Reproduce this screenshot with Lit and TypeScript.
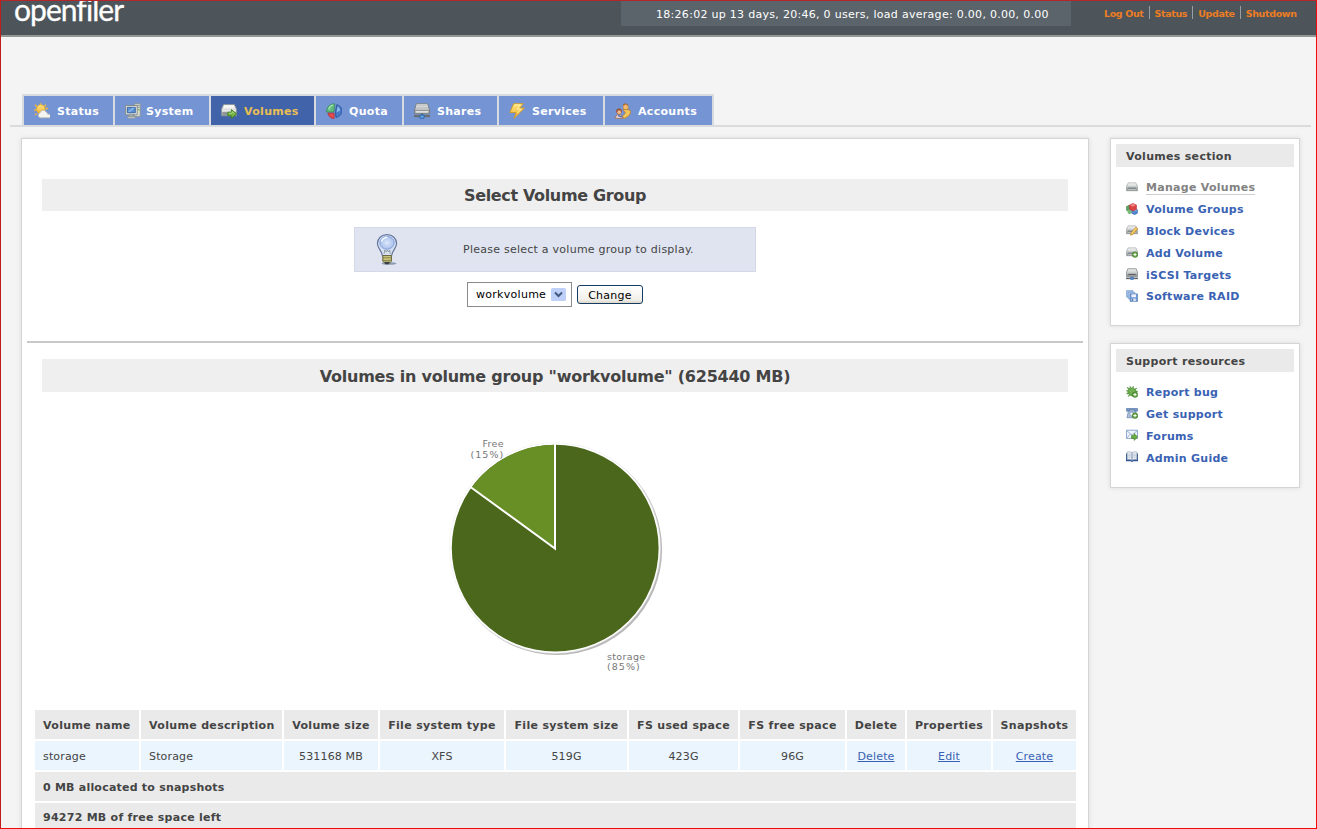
import { LitElement, html, css, svg } from "lit";
import { customElement, state } from "lit/decorators.js";
import { classMap } from "lit/directives/class-map.js";

const drive = svg`
  <path d="M3 2.500h10l2.500 4.700v5.800H.500V7.200z" fill="url(#steel)" stroke="#8f9496" stroke-width=".8"/>
  <path d="M3.400 3.200h9.200l1.300 2.800H2z" fill="#e4e5e5"/>
  <path d="M1 7.500h14v5.100H1z" fill="url(#steelDark)"/>
  <path d="M2.500 9h11v1.500h-11z" fill="#6f7578"/><path d="M2.500 11h11" stroke="#eee" stroke-width=".7"/>`;

const plus = svg`
  <circle cx="12" cy="11.500" r="3.700" fill="#5d9c3c" stroke="#3f7a28" stroke-width=".7"/>
  <path d="M12 9.300v4.400M9.800 11.500h4.400" stroke="#fff" stroke-width="1.300"/>`;

const ICONS: Record<string, unknown> = {
  status: svg`
    <path d="M6.500.2v2.200M1 1.800l1.800 1.800M12 1.800l-1.700 1.800M.2 7h2M1 12l1.700-1.500M14 5.500h-2" stroke="#edb63c" stroke-width="1.500"/>
    <circle cx="6.800" cy="6.200" r="4.400" fill="url(#gold)" stroke="#e5a52d" stroke-width=".8"/>
    <path d="M6.300 14.800a2.600 2.600 0 0 1-.3-5 3.300 3.300 0 0 1 6.200-.6 2 2 0 0 1 1.600 2 1.800 1.800 0 0 1 1.600 3.600z" fill="#f4f4f0" stroke="#b9b9ae" stroke-width=".8"/>`,
  system: svg`
    <path d="M9.500.8h5.700v12.600H9.500z" fill="#dcded7" stroke="#8d948d" stroke-width=".9"/>
    <path d="M11 2.600h3.400M11 4.400h3.400" stroke="#7e8883" stroke-width=".8"/><rect x="13" y="6" width="1.400" height="1.400" fill="#6abf3f"/>
    <path d="M.6 2.500h11.600v9.300H.6z" fill="#e4e6df" stroke="#7f8785" stroke-width=".9"/>
    <path d="M2.300 4.300h8v5.500h-8z" fill="#5b93d6" stroke="#315f9d" stroke-width=".9"/>
    <path d="M2.800 9 7.500 4.800h2.200L4.900 9z" fill="#8db9ea"/>
    <path d="M4.500 12.200h3.800v1.300H4.500zM2.800 13.600h7.200v1.600H2.800z" fill="#d3d6d0" stroke="#868d89" stroke-width=".6"/>`,
  volumes: svg`
    <path d="M2.700 1.500h10.600l2.200 4.500v6.800H.500V6z" fill="url(#steel)" stroke="#8a8f91" stroke-width=".8"/>
    <path d="M3.200 2.300h9.600L14 5.400H2z" fill="#f5f5f4"/><path d="M1 6.500h14v2H1z" fill="#e9e9e7"/><path d="M1.500 9.200h13v2.600h-13z" fill="#8d9294"/>
    <path d="M6.800 9.200h3.600V6.600l5.200 4.300-5.200 4.600v-2.700H6.800z" fill="#72b444" stroke="#3f7f23" stroke-width=".9"/><path d="M7.700 10.200h3.500V8.600l2.500 2.200" fill="none" stroke="#b5dd8c" stroke-width=".8"/>`,
  quota: svg`
    <path d="M.7 9C.4 3.700 4.500.8 8.700.8L7.800 9z" fill="#62bd7e" stroke="#2e8b50" stroke-width=".8"/>
    <path d="M2.700 6.400C3.400 3.700 5 2.400 7.300 2" stroke="#b5e7c0" fill="none" stroke-width="1.200"/>
    <path d="M1.800 10.200h6.300v5.200c-3 0-5.300-1.600-6.300-5.200z" fill="#e64c4c" stroke="#b52c33" stroke-width=".8"/>
    <path d="M10.800 1.700c4.200 1 5.600 4.700 4.800 7.900-.7 2.500-2.800 4.400-5.700 4.800L9.400 8.800z" fill="#467bc8" stroke="#264f96" stroke-width=".8"/>
    <path d="M11.600 3.500c1.500.9 2.300 2.300 2.500 4l-3.400 1.700z" fill="#91bae9"/>`,
  shares: svg`
    <path d="M2.300.8h11.400l1.800 6.400v3H.5v-3z" fill="url(#steel)" stroke="#74797b" stroke-width=".9"/>
    <path d="M3 2.400h10M2.500 4.300h11M2 6.100h12" stroke="#b5b8b8" stroke-width=".7"/>
    <path d="M1 7.600h14v2.600H1z" fill="#e6e7e5" stroke="#75797a" stroke-width=".7"/>
    <path d="M0 13h16" stroke="#6b6f71" stroke-width="2.400"/><path d="M8 10.500v2" stroke="#55595b" stroke-width="1.800"/>
    <path d="M6 12h4v3.300H6z" fill="#67a4e3" stroke="#2a64ad" stroke-width=".9"/>`,
  services: svg`
    <path d="M4.700.7h9.600L10.800 5h4.700L5 15.500l2.200-6H.8z" fill="url(#gold)" stroke="#d09b24" stroke-width=".9"/>
    <path d="M5.700 2h5.700L8.300 6.200h4L8.500 10" fill="none" stroke="#fff0a6" stroke-width=".9"/>`,
  accounts: svg`
    <path d="M8 1.800c1-2 4.800-2 5.200.8v3.500H8.600z" fill="#9b5b25"/><circle cx="10.700" cy="4.200" r="2.600" fill="#f2b96f" stroke="#b97c3c" stroke-width=".5"/>
    <path d="M8.200 7.200c2-1 5.300-.9 7.200.5.6 2.300-.8 5.700-6.200 7.700l-2-1.600c1.300-2 3-3 3.200-4.400z" fill="#f1c45d" stroke="#b67d28" stroke-width=".8"/>
    <circle cx="4" cy="8.200" r="2.800" fill="#9a4f31"/><circle cx="4.200" cy="9.200" r="1.900" fill="#f0b98b"/>
    <path d="M.5 15.400c0-3 1.500-4 3.500-4s3.600 1.200 3.600 4z" fill="#e9d4d4" stroke="#a06a4c" stroke-width=".8"/><path d="M3 12.500 7 14" stroke="#5a79b4" stroke-width="1.400"/>`,
  drive,
  groups: svg`
    <path d="M.6 4.800 4 3l3.500 1.800v5L4 11.600.6 9.800z" fill="#5ca566" stroke="#377d44" stroke-width=".7"/>
    <path d="m7.400 9 4-1.800L15.300 9v4.600l-3.900 1.900-4-1.900z" fill="#5487cb" stroke="#32609f" stroke-width=".7"/><path d="m7.600 9.200 3.800 1.600 3.600-1.600-3.600-1.500z" fill="#a5c6ec"/>
    <path d="m4.500 8.500 2.600 1.300v4L4.300 15l-2-1.200V9.700z" fill="#77ba7a"/>
    <path d="M4.500 2.800 9.200.5 14 2.700v5.500l-4.700 2.300-4.800-2.300z" fill="#dc4444" stroke="#b22c35" stroke-width=".7"/><path d="m5.500 2.900 3.800-1.700 3.800 1.600-3.900 1.900z" fill="#f29391"/>`,
  block: svg`${drive}<path d="m13 4.300 2.700 1.900-6.100 7.400-3.500 1.500.8-3.600z" fill="#efbc4c" stroke="#b98023" stroke-width=".8"/><path d="m13.500 5.800-6 7" stroke="#ffe69a"/>`,
  add: svg`${drive}${plus}`,
  iscsi: svg`
    <path d="M2.400 1h11.200l1.900 5.500v4.700H.5V6.500z" fill="url(#steel)" stroke="#6d7274" stroke-width=".9"/><path d="M1 6.800h14v4H1z" fill="url(#steelDark)"/><path d="M3 8.600h10" stroke="#5d6163" stroke-width="1.400"/>
    <path d="M0 13.800h16" stroke="#686c6e" stroke-width="2.200"/><path d="M6.300 12.300h3.400v3H6.300z" fill="#5797dd" stroke="#2762a9" stroke-width=".7"/>`,
  raid: svg`
    <path d="M.6.8h8.800v8.600H.6z" fill="#a3c0e8" stroke="#7a9ccd" stroke-width=".9"/>
    <path d="M2.900 3h8.800v8.800H2.900z" fill="#b5cdee" stroke="#7196cb" stroke-width=".9"/>
    <path d="M5.500 5.200h9.800v10H5.500z" fill="#719bd6" stroke="#4f79b5" stroke-width=".9"/><path d="M7.300 5.800h6v3.800h-6z" fill="#f1f5fb"/><path d="M7.600 11.400h5.500v3.500H7.600z" fill="#dce5ef"/><path d="M8.300 11.800h1.400v2.800H8.300z" fill="#41699f"/>`,
  bug: svg`
    <path d="M4.500 4 1.300 2M3.500 6.500.3 6.300M3.600 9 .8 10.500M6 3.300 5.300.5M9 3 10 .4M11.500 5l2.800-2.200M12.800 7.600l2.800-.3M5 11.500l-2 2.500" stroke="#5d9a48" stroke-width="1.600"/>
    <ellipse cx="8.200" cy="7.900" rx="5.900" ry="5.200" transform="rotate(28 8.200 7.900)" fill="#68a94a" stroke="#4b8837" stroke-width=".8"/><path d="m4.500 6 6 5M7 4l5 4" stroke="#8fc46c"/>${plus}`,
  phone: svg`
    <path d="M.7 5.500V2h14.600v3.500h-4V4H4.700v1.500z" fill="#7898c7" stroke="#4a6c9f" stroke-width=".8"/>
    <path d="M3.200 5.200h9.600l1.900 9.100H1.300z" fill="#aebfda" stroke="#5575a5" stroke-width=".8"/><circle cx="7.700" cy="9.400" r="2.700" fill="#f3f6fa" stroke="#6280ab" stroke-width=".8"/>${plus}`,
  mail: svg`
    <path d="M.6 1.600h14.800v11H.6z" fill="#f0f4fa" stroke="#6b8dbd"/><path d="m1 2.200 7 6 7-6M1 12l5-5.400" fill="none" stroke="#7f9dc8"/>
    <path d="M7.400 8.500h3.400V6l4.800 4.600-4.800 4.600v-2.600H7.400z" fill="#6aad42" stroke="#3f7d25" stroke-width=".8"/>`,
  book: svg`
    <path d="M0 3.200h16v10.500H9.500L8 15l-1.500-1.300H0z" fill="#31588f"/>
    <path d="M1.500 1.400C4.200.7 6.800 1.100 8 2.300c1.200-1.200 3.800-1.600 6.500-.9v10.200c-2.700-.6-5.100-.2-6.500.9-1.400-1.100-3.800-1.500-6.500-.9z" fill="#eef1f6" stroke="#7889a5" stroke-width=".7"/>
    <path d="M8 2.300v10" stroke="#536f9a" stroke-width="1.100"/><path d="M3 4.200h3.300M3 6.300h3.300M3 8.400h3.300M9.800 4.200H13M9.800 6.300H13M9.800 8.400H13" stroke="#a7b3c5" stroke-width=".9"/>`,
};

const icon = (name: string, cls: string) =>
  html`<svg class=${cls} viewBox="0 0 16 16" aria-hidden="true">${ICONS[name]}</svg>`;

const TABS = [
  ["status", "Status"],
  ["system", "System"],
  ["volumes", "Volumes"],
  ["quota", "Quota"],
  ["shares", "Shares"],
  ["services", "Services"],
  ["accounts", "Accounts"],
];

const SECTION_LINKS = [
  ["drive", "Manage Volumes"],
  ["groups", "Volume Groups"],
  ["block", "Block Devices"],
  ["add", "Add Volume"],
  ["iscsi", "iSCSI Targets"],
  ["raid", "Software RAID"],
];

const SUPPORT_LINKS = [
  ["bug", "Report bug"],
  ["phone", "Get support"],
  ["mail", "Forums"],
  ["book", "Admin Guide"],
];

const COLUMNS = [
  "Volume name", "Volume description", "Volume size", "File system type", "File system size",
  "FS used space", "FS free space", "Delete", "Properties", "Snapshots",
];
const VOLUME = ["storage", "Storage", "531168 MB", "XFS", "519G", "423G", "96G"];
const ACTIONS = ["Delete", "Edit", "Create"];

@customElement("app-root")
export class AppRoot extends LitElement {
  @state() private tab = "Volumes";

  static styles = css`
    :host {
      display: block;
      box-sizing: border-box;
      width: 1317px;
      height: 829px;
      overflow: hidden;
      border: 1px solid #f00a0a;
      border-top-color: #b4262a;
      border-left-color: #c01c1c;
      background: #f4f4f4;
      color: #444;
      font-family: "DejaVu Sans", Verdana, sans-serif;
      font-size: 11px;
      line-height: 14px;
    }
    * { box-sizing: border-box; }
    a { color: #3a62b3; text-decoration: none; cursor: pointer; }
    .defs { display: block; width: 0; height: 0; }
    .header {
      display: flex;
      align-items: flex-start;
      height: 36px;
      background: #4d555a;
      border-bottom: 2px solid #929896;
    }
    .logo {
      width: 620px;
      padding-left: 13px;
      color: #fff;
      font: 400 30px/17px Lato, sans-serif;
      letter-spacing: -0.95px;
      -webkit-text-stroke: 0.3px #fff;
    }
    .uptime {
      width: 450px;
      height: 25px;
      padding: 6px 0 0 35px;
      background: #5b646a;
      color: #fff;
      white-space: nowrap;
      line-height: 16px;
      letter-spacing: 0.29px;
    }
    .session { display: flex; padding: 5px 0 0 28px; font-size: 9.5px; font-weight: 700; }
    .session a {
      height: 13px;
      padding: 0 5px;
      color: #ee7d22;
      line-height: 16px;
      letter-spacing: -0.36px;
      white-space: nowrap;
      border-right: 1px solid #9a9fa1;
    }
    .session a:last-child { border: 0; }
    .nav { margin: 57px 5px 0 9px; padding-left: 12px; border-bottom: 2px solid #dadbdc; }
    .tabs {
      display: grid;
      grid-template-columns: 89px 94px 103px 86px 93px 104px 107px;
      gap: 2px;
      width: 692px;
      padding: 2px 2px 0;
      background: #d8dbdf;
    }
    .tab {
      display: flex;
      align-items: center;
      height: 29px;
      padding: 1px 0 0 10px;
      background: #7594d4;
      color: #fff;
      font-weight: 700;
      letter-spacing: 0.3px;
      line-height: 15px;
    }
    .tab:nth-child(2) .tab-icon { margin-right: 5px; }
    .tab.current { background: #4163aa; color: #e9bf52; }
    .tab-icon { width: 16px; height: 16px; margin-right: 7px; }
    .body { display: flex; align-items: flex-start; gap: 21px; padding: 11px 0 0 20px; }
    .panel { background: #fff; border: 1px solid #d4d5d6; box-shadow: 0 0 5px rgba(0, 0, 0, 0.1); }
    .main { width: 1068px; height: 720px; padding: 40px 5px 0; }
    .band {
      height: 32px;
      margin: 0 15px;
      background: #efefef;
      text-align: center;
      font-size: 16px;
      font-weight: 700;
      line-height: 33px;
      letter-spacing: -0.35px;
    }
    .tip {
      display: flex;
      align-items: center;
      width: 402px;
      height: 45px;
      margin: 16px auto 10px;
      border: 1px solid #d3d9e7;
      background: #e0e4f0;
      letter-spacing: 0.25px;
    }
    .bulb { width: 24px; height: 34px; margin: 0 64px 0 20px; }
    .picker { display: flex; align-items: center; justify-content: center; gap: 5px; height: 25px; color: #000; }
    .select {
      display: flex;
      align-items: center;
      justify-content: space-between;
      width: 105px;
      height: 25px;
      padding: 0 5px 0 8px;
      border: 1px solid #8b8b8b;
      background: #fff;
      letter-spacing: 0.28px;
    }
    .value { padding-top: 1px; }
    .arrow { width: 15px; height: 13px; }
    .change {
      width: 66px;
      height: 19px;
      padding: 1px 0 0;
      border: 1px solid #163c61;
      border-radius: 3px;
      background: linear-gradient(#fff, #f1f0ea 80%, #dcd7cc);
      color: #000;
      font: inherit;
      letter-spacing: 0.25px;
      line-height: 17px;
    }
    .rule { height: 2px; margin: 34px 0 16px; background: #c8c8c8; }
    .band.second { height: 33px; line-height: 35px; letter-spacing: -0.24px; }
    .chart { display: block; width: 260px; height: 260px; margin: 33px auto 25px; }
    .chart text { font-size: 9.5px; fill: #777; letter-spacing: 0.35px; }
    .table {
      display: grid;
      grid-template-columns: 104px 141px 94px 124px 121px 109px 105px 58px 84px 83px;
      gap: 2px;
      margin-left: 8px;
      width: 1041px;
    }
    .cell {
      height: 29px;
      padding: 0 8px;
      background: #ebf5fe;
      line-height: 31px;
      text-align: center;
      white-space: nowrap;
      letter-spacing: 0.15px;
    }
    .cell.left { text-align: left; }
    .cell.head { padding: 0; background: #eaeaea; font-weight: 700; letter-spacing: 0.33px; }
    .cell.head.left { padding-left: 8px; }
    .cell.head.wide { grid-column: 1 / -1; letter-spacing: 0.22px; }
    .cell.head.wide:last-child { line-height: 29px; letter-spacing: 0.26px; }
    .cell a { text-decoration: underline; }
    .side { display: flex; flex-direction: column; gap: 17px; width: 190px; }
    .box { padding: 5px 5px 18px; }
    .box + .box { padding-bottom: 19px; }
    .box-title {
      height: 23px;
      margin-bottom: 9px;
      padding-left: 10px;
      background: #eaeaea;
      line-height: 25px;
      font-weight: 700;
      letter-spacing: 0.3px;
    }
    .link { display: flex; align-items: center; height: 21.8px; padding-left: 10px; font-weight: 700; letter-spacing: 0.28px; }
    .link a { height: 14px; line-height: 15px; margin-top: 1px; }
    .link-icon { width: 12px; height: 12px; margin-right: 8px; }
    .link.current a { color: #828282; box-shadow: 0 1px #cfcfcf; }
  `;

  private links(title: string, items: string[][]) {
    return html`<section class="panel box">
      <div class="box-title">${title}</div>
      ${items.map(
        ([glyph, label]) => html`<div class=${classMap({ link: true, current: label === "Manage Volumes" })}>
          ${icon(glyph, "link-icon")}<a>${label}</a>
        </div>`
      )}
    </section>`;
  }

  render() {
    return html`
      <svg class="defs" aria-hidden="true">
        <defs>
          <linearGradient id="steel" x2="0" y2="1"><stop stop-color="#f2f2f2" /><stop offset="1" stop-color="#a5a9aa" /></linearGradient>
          <linearGradient id="steelDark" x2="0" y2="1"><stop stop-color="#bfc2c3" /><stop offset="1" stop-color="#8d9294" /></linearGradient>
          <linearGradient id="gold" x2="0" y2="1"><stop stop-color="#ffe680" /><stop offset="1" stop-color="#f0ad2e" /></linearGradient>
          <radialGradient id="glass"><stop stop-color="#dce8fb" /><stop offset="1" stop-color="#a9c0ec" /></radialGradient>
        </defs>
      </svg>
      <header class="header">
        <div class="logo">openfiler</div>
        <div class="uptime">18:26:02 up 13 days, 20:46, 0 users, load average: 0.00, 0.00, 0.00</div>
        <nav class="session"><a>Log Out</a><a>Status</a><a>Update</a><a>Shutdown</a></nav>
      </header>
      <nav class="nav">
        <div class="tabs">
          ${TABS.map(
            ([glyph, label]) => html`<a
              class=${classMap({ tab: true, current: label === this.tab })}
              @click=${() => (this.tab = label)}
              >${icon(glyph, "tab-icon")}${label}</a
            >`
          )}
        </div>
      </nav>
      <div class="body">
        <main class="panel main">
          <div class="band">Select Volume Group</div>
          <div class="tip">
            <svg class="bulb" viewBox="0 0 24 34" aria-hidden="true">
              <ellipse cx="14" cy="30.500" rx="7.500" ry="1.300" fill="#8c9bb5" />
              <path d="M12 1.600c-5.600 0-9.600 4-9.600 9 0 4.600 4.200 6.600 5 12h9.200c.8-5.400 5-7.400 5-12 0-5-4-9-9.600-9z" fill="#d5e0f3" stroke="#65769c" stroke-width="1.200" />
              <ellipse cx="12" cy="9.800" rx="7.200" ry="6.400" fill="url(#glass)" stroke="#86a1dc" />
              <path d="M6.500 8.500c1-2.800 3-4.200 6-4.200" fill="none" stroke="#f6faff" stroke-width="1.400" />
              <path d="m9 21 .8-4 1.500 2 1-2 1.200 2 1.300-2 .4 4" fill="none" stroke="#8a8f92" stroke-width=".8" />
              <path d="M7.800 22.600h8.600v5.600l-2 2.200h-4.500l-2.100-2.200z" fill="#d6cf84" stroke="#66643c" />
              <path d="M8 24.800h8.400M8 27.300h8.400" stroke="#6b6938" stroke-width=".8" /><path d="M9 28.800h6l-1.500 2.500h-3z" fill="#3d4046" />
            </svg>
            <span>Please select a volume group to display.</span>
          </div>
          <div class="picker">
            <div class="select">
              <span class="value">workvolume</span>
              <svg class="arrow" viewBox="0 0 15 13" aria-hidden="true">
                <rect width="15" height="13" rx="1.500" fill="#bfd0f8" /><path d="m4 4.500 3.500 3.500L11 4.500" fill="none" stroke="#42597f" stroke-width="2" />
              </svg>
            </div>
            <button class="change">Change</button>
          </div>
          <div class="rule"></div>
          <div class="band second">Volumes in volume group "workvolume" (625440 MB)</div>
          <svg class="chart" viewBox="425 425 260 260" role="img" aria-label="Volume usage">
            <circle cx="556.500" cy="549.500" r="105.600" fill="#b9b9b9" />
            <circle cx="555" cy="548" r="105.300" fill="#fff" stroke="#eee" stroke-width=".6" />
            <circle cx="555.200" cy="548.200" r="103.400" fill="#4a671b" />
            <path d="M555 548V444.800A103.400 103.400 0 0 0 471.500 487.400Z" fill="#688e26" />
            <path d="M555 443V548.500L470.500 487" fill="none" stroke="#fff" stroke-width="2" />
            <text x="504" y="447" text-anchor="end">Free</text>
            <text x="503.500" y="458" text-anchor="end" textLength="33">(15%)</text>
            <text x="607" y="659.500">storage</text>
            <text x="607" y="670" textLength="33">(85%)</text>
          </svg>
          <div class="table">
            ${COLUMNS.map((c, i) => html`<div class=${classMap({ cell: true, head: true, left: i < 2 })}>${c}</div>`)}
            ${VOLUME.map((v, i) => html`<div class=${classMap({ cell: true, left: i < 2 })}>${v}</div>`)}
            ${ACTIONS.map((a) => html`<div class="cell"><a>${a}</a></div>`)}
            <div class="cell head left wide">0 MB allocated to snapshots</div>
            <div class="cell head left wide">94272 MB of free space left</div>
          </div>
        </main>
        <aside class="side">${this.links("Volumes section", SECTION_LINKS)} ${this.links("Support resources", SUPPORT_LINKS)}</aside>
      </div>
    `;
  }
}
